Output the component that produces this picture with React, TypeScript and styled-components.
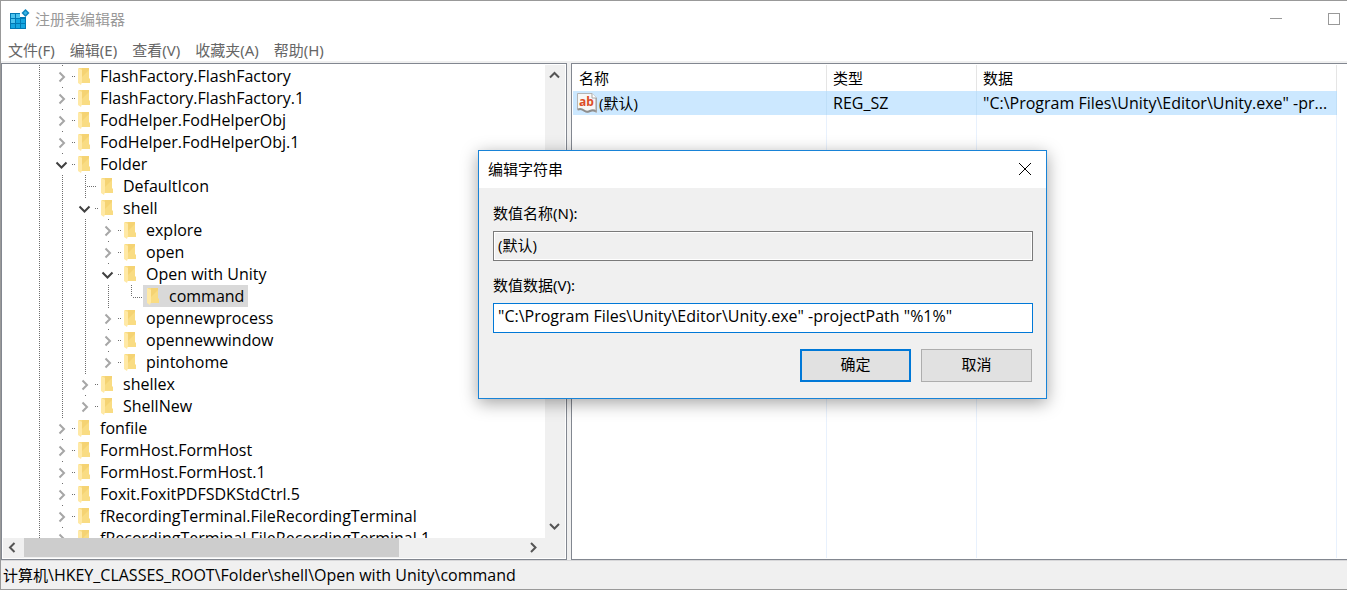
import React from "react";
import styled, { createGlobalStyle, css } from "styled-components";

const GlobalStyle = createGlobalStyle`
  * { box-sizing: border-box; }
  html, body, #root { height: 100%; }
  body {
    margin: 0;
    overflow: hidden;
    background: #fff;
  }
  body, button, input {
    font-family: "Noto Sans", "Noto Sans CJK SC", sans-serif;
    font-size: 15px;
    line-height: 22px;
    color: #000;
  }
  button { border: 0; padding: 0; background: none; }
`;

const latin = css`
  font-family: "Open Sans", "Noto Sans CJK SC", sans-serif;
  font-size: 16px;
`;

const Window = styled.div`
  position: relative;
  display: flex;
  flex-direction: column;
  height: 100%;
  min-width: 1060px;
  background: #fff;
  border: 1px solid #999;
  border-right: 0;
`;

const TitleBar = styled.header`
  display: flex;
  height: 36px;
  flex: none;
`;

const AppTitle = styled.div`
  flex: 1;
  display: flex;
  align-items: center;
  gap: 5px;
  padding-left: 8px;
  color: #999;
`;

const CaptionButton = styled.button<{ $width: number }>`
  width: ${(p) => p.$width}px;
  display: flex;
  align-items: center;
  padding-left: 23px;
`;

const MenuBar = styled.nav`
  display: flex;
  height: 26px;
  flex: none;
  align-items: center;
  gap: 1px;
  padding-top: 2px;
  border-bottom: 2px solid #f0f0f0;
`;

const MenuItem = styled.button`
  padding: 0 7px;
  color: #666;
  white-space: nowrap;
`;

const Workspace = styled.main`
  flex: 1;
  min-height: 0;
  display: flex;
  gap: 4px;
  background: #f0f0f0;
`;

const pane = css`
  border: 1px solid #828790;
  padding: 1px;
  background: #fff;
  min-height: 0;
`;

const TreePane = styled.section`
  ${pane}
  flex: 0 0 566px;
  display: grid;
  grid-template-columns: minmax(0, 1fr) 20px;
  grid-template-rows: minmax(0, 1fr) 20px;
`;

const Tree = styled.ul`
  ${latin}
  margin: 0;
  padding: 0 0 0 25px;
  list-style: none;
  overflow: hidden;
`;

const TreeRow = styled.li`
  display: flex;
  height: 22px;
`;

const Glyph = styled.svg`
  display: block;
  flex: none;
  overflow: visible;
`;

const TreeItem = styled.span<{ $selected?: boolean }>`
  display: flex;
  align-items: center;
  padding: 0 4px;
  gap: 10px;
  white-space: nowrap;
  background: ${(p) => (p.$selected ? "#d9d9d9" : "transparent")};
`;

const ScrollButton = styled.button`
  width: 21px;
  display: flex;
  align-items: center;
  justify-content: center;
  padding: 0 2px 1px 0;
`;

const VerticalBar = styled.div`
  display: flex;
  flex-direction: column;
  justify-content: space-between;
  background: #f0f0f0;

  ${ScrollButton} {
    width: 20px;
    height: 22px;
  }
`;

const HorizontalBar = styled.div`
  display: flex;
  background: #f0f0f0;
`;

const ScrollTrack = styled.div`
  flex: 1;
`;

const ScrollThumb = styled.div`
  width: 75%;
  height: 19px;
  background: #cdcdcd;
`;

const Corner = styled.div`
  background: #f0f0f0;
`;

const ValuePane = styled.section`
  ${pane}
  flex: 1;
  min-width: 0;
  border-right: 0;
  padding-right: 10px;
`;

const ValueTable = styled.table`
  width: 100%;
  height: 100%;
  table-layout: fixed;
  border-collapse: separate;
  border-spacing: 0;
`;

const HeadCell = styled.th`
  height: 26px;
  padding: 0 6px;
  font-weight: 400;
  text-align: left;
  border-right: 1px solid #e5e5e5;
`;

const ValueCell = styled.td`
  ${latin}
  height: 24px;
  padding: 0 6px;
  overflow: hidden;
  white-space: nowrap;
  text-overflow: ellipsis;
  background: #cce8ff;
  border-right: 1px solid #bfdff8;
`;

const NameCell = styled(ValueCell)`
  padding-left: 4px;
  font-size: 15px;
`;

const ValueName = styled.span`
  display: flex;
  align-items: center;
  gap: 2px;
`;

const BlankCell = styled.td`
  padding: 0;
  border-right: 1px solid #e8f1fd;
`;

const StatusBar = styled.footer`
  flex: none;
  height: 29px;
  padding: 3px 2px;
  border-top: 1px solid #d7d7d9;
  background: #f0f0f0;
  white-space: nowrap;
`;

const KeyPath = styled.span`
  ${latin}
`;

const Dialog = styled.form`
  position: absolute;
  left: 477px;
  top: 149px;
  width: 569px;
  border: 1px solid #1883d7;
  background: #f0f0f0;
  box-shadow: 0 4px 16px rgba(0, 0, 0, 0.36);
`;

const DialogTitle = styled.div`
  display: flex;
  align-items: center;
  justify-content: space-between;
  height: 37px;
  padding: 0 15px 2px 9px;
  background: #fff;
`;

const DialogBody = styled.div`
  display: flex;
  flex-direction: column;
  padding: 14px 13px 16px 14px;
`;

const FieldLabel = styled.label`
  height: 29px;
`;

const Field = styled.input`
  ${latin}
  width: 100%;
  height: 30px;
  margin-bottom: 13px;
  padding: 0 4px 4px;
  border: 1px solid #0078d7;
  border-radius: 0;
  background: #fff;
  outline: 0;

  &:read-only {
    font-size: 15px;
    border-color: #7a7a7a;
    background: #f0f0f0;
    box-shadow: inset 0 0 0 1px #fff;
  }
`;

const Actions = styled.div`
  display: flex;
  justify-content: flex-end;
  gap: 10px;
  padding: 3px 1px 0 0;
`;

const ActionButton = styled.button<{ $primary?: boolean }>`
  width: 111px;
  height: 33px;
  padding-bottom: 3px;
  background: #e1e1e1;
  border: ${(p) => (p.$primary ? "2px solid #0078d7" : "1px solid #adadad")};
`;

type Kind = "closed" | "open" | "leaf" | "last";

const nodes: [string, number, Kind][] = [
  ["FlashFactory.FlashFactory", 1, "closed"],
  ["FlashFactory.FlashFactory.1", 1, "closed"],
  ["FodHelper.FodHelperObj", 1, "closed"],
  ["FodHelper.FodHelperObj.1", 1, "closed"],
  ["Folder", 1, "open"],
  ["DefaultIcon", 2, "leaf"],
  ["shell", 2, "open"],
  ["explore", 3, "closed"],
  ["open", 3, "closed"],
  ["Open with Unity", 3, "open"],
  ["command", 4, "last"],
  ["opennewprocess", 3, "closed"],
  ["opennewwindow", 3, "closed"],
  ["pintohome", 3, "closed"],
  ["shellex", 2, "closed"],
  ["ShellNew", 2, "closed"],
  ["fonfile", 1, "closed"],
  ["FormHost.FormHost", 1, "closed"],
  ["FormHost.FormHost.1", 1, "closed"],
  ["Foxit.FoxitPDFSDKStdCtrl.5", 1, "closed"],
  ["fRecordingTerminal.FileRecordingTerminal", 1, "closed"],
  ["fRecordingTerminal.FileRecordingTerminal.1", 1, "closed"],
];

const dots = { stroke: "#6e6e6e", strokeDasharray: "1 1", fill: "none" };

const Guide = () => (
  <Glyph width="23" height="22">
    <path d="M11.5 0V22" {...dots} />
  </Glyph>
);

const Toggle = ({ kind }: { kind: Kind }) => (
  <Glyph width="23" height="22">
    {kind === "leaf" && <path d="M11.5 0V22M13 11.5H23" {...dots} />}
    {kind === "last" && <path d="M11.5 0V12M13 12.5H23" {...dots} />}
    {(kind === "closed" || kind === "open") && (
      <path d="M11 .5H12M21 11.5H24" {...dots} />
    )}
    {kind === "closed" && (
      <path d="M8.5 7.500L13 12L8.5 16.500" fill="none" stroke="#a6a6a6" strokeWidth="2" />
    )}
    {kind === "open" && (
      <path d="M5.5 9.5L10.5 14.5L15.5 9.5" fill="none" stroke="#404040" strokeWidth="2" />
    )}
  </Glyph>
);

const FolderIcon = () => (
  <Glyph width="12" height="16">
    <path d="M1 0H11V10L12 11V15H1Z" fill="#f9dc83" />
    <path d="M4 0H11V2L4 9Z" fill="#f5d373" />
    <path d="M0 0L4 2V14L3 17L0 15Z" fill="#ffe9a6" />
  </Glyph>
);

const RegistryIcon = () => (
  <Glyph width="21" height="21">
    <path d="M1 4H11V8H17V20H1Z" fill="#0078b4" />
    <path
      d="M2 5H6V9H2ZM7 5H11V9H7ZM2 10H6V14H2ZM7 10H11V14H7ZM12 10H16V14H12ZM2 15H6V19H2ZM7 15H11V19H7ZM12 15H16V19H12Z"
      fill="#14a5e0"
    />
    <path d="M2 5H6V9H2ZM7 5H11V9H7ZM2 10H6V14H2Z" fill="#4cc3ee" />
    <path d="M16.500 0L20.500 4L16.500 8L12.500 4Z" fill="#0d83bd" />
    <path d="M16.500 2L18.500 4L16.500 6L14.500 4Z" fill="#39b5e5" />
  </Glyph>
);

const StringIcon = () => (
  <Glyph width="20" height="20">
    <path
      d="M.5 .5H15L19.5 5V19.5C17 17.5 15 17.5 13 18.5S9 19.5 7 18S3 16 .5 17Z"
      fill="#f7f7f7"
      stroke="#b4b4b4"
    />
    <path
      d="M1 16.500C3 15.500 5 16 7 17.500S11 19 13 18S17 17 19 18.500"
      fill="none"
      stroke="#8d8d8d"
      strokeWidth="2"
    />
    <path d="M15 .5V5H19.500" fill="#fff" stroke="#a5a5a5" />
    <path d="M19 5V19" stroke="#9a9a9a" />
    <text
      x="2"
      y="13"
      fill="#dc4c26"
      fontFamily="Open Sans, sans-serif"
      fontWeight="700"
      fontSize="12"
    >
      ab
    </text>
  </Glyph>
);

const arrows = {
  up: "M1 7.500L5.500 3L10 7.500",
  down: "M1 3L5.500 7.500L10 3",
  left: "M7.500 1L3 5.500L7.500 10",
  right: "M3 1L7.500 5.500L3 10",
};

const Arrow = ({ to }: { to: keyof typeof arrows }) => (
  <ScrollButton type="button" aria-label={`Scroll ${to}`}>
    <Glyph width="11" height="11">
      <path d={arrows[to]} fill="none" stroke="#555" strokeWidth="2" />
    </Glyph>
  </ScrollButton>
);

export default function App() {
  return (
    <>
      <GlobalStyle />
      <Window>
        <TitleBar>
          <AppTitle>
            <RegistryIcon />
            注册表编辑器
          </AppTitle>
          <CaptionButton $width={58} aria-label="最小化">
            <Glyph width="12" height="12">
              <path d="M0 5.500H12" stroke="#999" />
            </Glyph>
          </CaptionButton>
          <CaptionButton $width={42} aria-label="最大化">
            <Glyph width="12" height="12">
              <rect x=".5" y=".5" width="11" height="11" fill="none" stroke="#999" />
            </Glyph>
          </CaptionButton>
        </TitleBar>
        <MenuBar>
          {["文件(F)", "编辑(E)", "查看(V)", "收藏夹(A)", "帮助(H)"].map((m) => (
            <MenuItem key={m}>{m}</MenuItem>
          ))}
        </MenuBar>
        <Workspace>
          <TreePane>
            <Tree>
              {nodes.map(([name, depth, kind]) => (
                <TreeRow key={name}>
                  {Array.from({ length: depth }, (_, i) => (
                    <Guide key={i} />
                  ))}
                  <Toggle kind={kind} />
                  <TreeItem $selected={name === "command"}>
                    <FolderIcon />
                    {name}
                  </TreeItem>
                </TreeRow>
              ))}
            </Tree>
            <VerticalBar>
              <Arrow to="up" />
              <Arrow to="down" />
            </VerticalBar>
            <HorizontalBar>
              <Arrow to="left" />
              <ScrollTrack>
                <ScrollThumb />
              </ScrollTrack>
              <Arrow to="right" />
            </HorizontalBar>
            <Corner />
          </TreePane>
          <ValuePane>
            <ValueTable>
              <colgroup>
                <col width="254" />
                <col width="150" />
                <col />
              </colgroup>
              <thead>
                <tr>
                  <HeadCell>名称</HeadCell>
                  <HeadCell>类型</HeadCell>
                  <HeadCell>数据</HeadCell>
                </tr>
              </thead>
              <tbody>
                <tr>
                  <NameCell>
                    <ValueName>
                      <StringIcon />
                      (默认)
                    </ValueName>
                  </NameCell>
                  <ValueCell>REG_SZ</ValueCell>
                  <ValueCell>"C:\Program Files\Unity\Editor\Unity.exe" -pr...</ValueCell>
                </tr>
                <tr>
                  <BlankCell />
                  <BlankCell />
                  <BlankCell />
                </tr>
              </tbody>
            </ValueTable>
          </ValuePane>
        </Workspace>
        <StatusBar>
          计算机<KeyPath>\HKEY_CLASSES_ROOT\Folder\shell\Open with Unity\command</KeyPath>
        </StatusBar>

        <Dialog role="dialog" aria-label="编辑字符串" onSubmit={(e) => e.preventDefault()}>
          <DialogTitle>
            编辑字符串
            <button type="button" aria-label="关闭">
              <Glyph width="12" height="12">
                <path d="M0 0L12 12M12 0L0 12" stroke="#000" />
              </Glyph>
            </button>
          </DialogTitle>
          <DialogBody>
            <FieldLabel htmlFor="value-name">数值名称(N):</FieldLabel>
            <Field id="value-name" readOnly defaultValue="(默认)" />
            <FieldLabel htmlFor="value-data">数值数据(V):</FieldLabel>
            <Field
              id="value-data"
              defaultValue={'"C:\\Program Files\\Unity\\Editor\\Unity.exe" -projectPath "%1%"'}
            />
            <Actions>
              <ActionButton $primary type="submit">
                确定
              </ActionButton>
              <ActionButton type="button">取消</ActionButton>
            </Actions>
          </DialogBody>
        </Dialog>
      </Window>
    </>
  );
}
